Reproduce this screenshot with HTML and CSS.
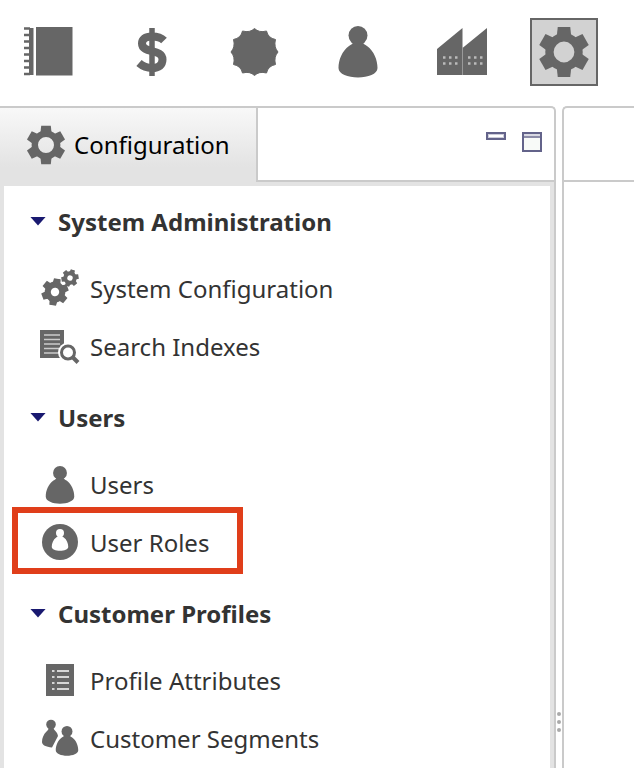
FILE: index.html
```html
<!DOCTYPE html>
<html lang="en">
<head>
<meta charset="utf-8">
<title>Configuration</title>
<link rel="stylesheet" href="styles.css">
</head>
<body>
<svg class="defs" aria-hidden="true">
  <symbol id="gear" viewBox="-25 -25 50 50">
    <circle r="14" fill="none" stroke="currentColor" stroke-width="8"/>
    <g fill="currentColor">
      <path id="tooth" d="M-6-24H6L7-15H-7Z"/>
      <use href="#tooth" transform="rotate(60)"/>
      <use href="#tooth" transform="rotate(120)"/>
      <use href="#tooth" transform="rotate(180)"/>
      <use href="#tooth" transform="rotate(240)"/>
      <use href="#tooth" transform="rotate(300)"/>
    </g>
  </symbol>
  <symbol id="cog" viewBox="-25 -25 50 50">
    <circle r="13" fill="none" stroke="currentColor" stroke-width="11"/>
    <g fill="currentColor">
      <use href="#tooth"/>
      <use href="#tooth" transform="rotate(60)"/>
      <use href="#tooth" transform="rotate(120)"/>
      <use href="#tooth" transform="rotate(180)"/>
      <use href="#tooth" transform="rotate(240)"/>
      <use href="#tooth" transform="rotate(300)"/>
    </g>
  </symbol>
  <symbol id="person" viewBox="-26 -26 52 52">
    <circle cy="-16.5" r="9.5"/>
    <path d="M-5-10C-5-8-7-7.500-9-6C-16-1-19.500 8-19.500 16C-19.500 22-10 25.500 0 25.500S19.500 22 19.500 16C19.500 8 16-1 9-6C7-7.500 5-8 5-10Z"/>
  </symbol>
</svg>

<nav class="toolbar" aria-label="Perspectives">
  <button class="tool" aria-label="Catalog">
    <svg viewBox="0 0 52 52"><path fill="currentColor" d="M13 1H49.500V49.500H13ZM6 2H10.500V49H6Z"/><path d="M1 2.500H7M1 9H7M1 15.500H7M1 22H7M1 28.500H7M1 35H7M1 41.500H7M1 48H7" stroke="currentColor" stroke-width="2.500"/></svg>
  </button>
  <button class="tool" aria-label="Pricing">
    <svg viewBox="0 0 52 52" fill="none" stroke="currentColor"><path stroke-width="5.500" d="M26 2V50"/><path stroke-width="8" d="M38 14.500C35 11.500 31 10.500 26 10.500C19 10.500 16 13.500 16 17.500C16 28 36.500 22 36.500 33.500C36.500 39 33 42 26 42C21 42 17 40.500 13 37"/></svg>
  </button>
  <button class="tool" aria-label="Promotions">
    <svg viewBox="-26 -26 52 52" fill="currentColor" stroke="currentColor" stroke-width="1" stroke-linejoin="round"><path d="M-.500-23.500Q4-19 11.500-21Q13-14 20.500-12.500Q18.500-5 23 0Q18.500 5 20.500 12.500Q13 14 11.500 21Q4 19-.500 23.500Q-5 19-12.500 21Q-14 14-21.500 12.500Q-19.500 5-24 0Q-19.500-5-21.500-12.500Q-14-14-12.500-21Q-5-19-.500-23.500Z"/></svg>
  </button>
  <button class="tool" aria-label="Customers">
    <svg fill="currentColor"><use href="#person"/></svg>
  </button>
  <button class="tool" aria-label="Warehouse">
    <svg viewBox="0 0 52 52"><path fill="currentColor" d="M2 23L27.500 2V22L52 2V49H2Z"/><path d="M27.500 22V49" stroke="#999"/><path stroke="#bbb" stroke-width="2.500" stroke-dasharray="2.500 3.500" d="M8 31.500H22.500M8 37.500H22.500M33 31.500H47.500M33 37.500H47.500"/></svg>
  </button>
  <button class="tool tool-active" aria-label="Configuration" aria-pressed="true">
    <svg><use href="#gear"/></svg>
  </button>
</nav>

<main class="workbench">
  <section class="panel">
    <header class="panel-head">
      <button class="tab"><svg class="tab-icon"><use href="#gear"/></svg>Configuration</button>
      <div class="window-tools">
        <button class="minimize" aria-label="Minimize"></button>
        <button class="maximize" aria-label="Maximize"></button>
      </div>
    </header>
    <div class="panel-body">
      <section class="group">
        <h2><button class="group-toggle" aria-expanded="true">System Administration</button></h2>
        <ul>
          <li><a href="#system-configuration">
            <svg class="icon" viewBox="0 0 40 40"><use href="#cog" x="1" y="9" width="28" height="28" transform="rotate(10 15 23)"/><use href="#cog" x="21" y="0" width="18" height="18" transform="rotate(20 30 9)"/></svg>
            System Configuration</a></li>
          <li><a href="#search-indexes">
            <svg class="icon" viewBox="0 0 40 40"><path fill="currentColor" d="M0 3H24V31H0Z"/><path stroke="#ccc" stroke-width="1.500" d="M4 8H20M4 12.500H20M4 17H20M4 21.500H20M4 26H20"/><circle cx="28" cy="25.500" r="10" fill="#fff"/><circle cx="28" cy="25.500" r="6.500" fill="#fff" stroke="currentColor" stroke-width="3"/><path stroke="currentColor" stroke-width="4" d="M32 29.500L38 35.500"/></svg>
            Search Indexes</a></li>
        </ul>
      </section>
      <section class="group">
        <h2><button class="group-toggle" aria-expanded="true">Users</button></h2>
        <ul>
          <li><a href="#users">
            <svg class="icon" viewBox="0 0 40 40"><use href="#person" x="1" y="1" width="38" height="38"/></svg>
            Users</a></li>
          <li class="highlighted"><a href="#user-roles">
            <svg class="icon" viewBox="0 0 40 40"><circle cx="20" cy="19" r="18"/><use class="cutout" href="#person" x="9" y="6" width="22" height="22"/></svg>
            User Roles</a></li>
        </ul>
      </section>
      <section class="group">
        <h2><button class="group-toggle" aria-expanded="true">Customer Profiles</button></h2>
        <ul>
          <li><a href="#profile-attributes">
            <svg class="icon" viewBox="0 0 40 40"><path fill="currentColor" d="M6 3H34V35H6Z"/><path stroke="#d5d5d5" stroke-width="2" d="M12 10H14.500M17 10H29M12 16H14.500M17 16H29M12 22H14.500M17 22H29M12 28H14.500M17 28H29"/></svg>
            Profile Attributes</a></li>
          <li><a href="#customer-segments">
            <svg class="icon" viewBox="0 0 40 40"><circle cx="11" cy="5.500" r="4.800"/><path d="M8.500 8C9 10 8 11 6.500 12.500C3.500 15.500 2 19 2 23C2 26 6 28 12 28.500L18 17C17.500 14 16 12.500 14.500 11C13.500 10 13.500 9 13.500 8Z"/><use class="halo" href="#person" x="12" y="7" width="30" height="30"/><use href="#person" x="12" y="7" width="30" height="30"/></svg>
            Customer Segments</a></li>
        </ul>
      </section>
    </div>
  </section>
  <div class="splitter" role="separator" aria-orientation="vertical"><i></i><i></i><i></i></div>
  <section class="panel editor" aria-label="Editor"><header class="panel-head"></header></section>
</main>
</body>
</html>
```
FILE: styles.css
```css
* { box-sizing: border-box; }

body {
  margin: 0;
  height: 100vh;
  overflow: hidden;
  display: flex;
  flex-direction: column;
  background: #fff;
  color: #333;
  font: 24px/32px "Noto Sans", sans-serif;
}

button {
  margin: 0;
  padding: 0;
  border: 0;
  background: none;
  color: inherit;
  font: inherit;
}

.defs { position: absolute; width: 0; height: 0; }

.toolbar {
  display: flex;
  gap: 35px;
  padding: 18px 15px 20px;
}

.tool {
  display: grid;
  place-items: center;
  flex: none;
  width: 68px;
  height: 68px;
  color: #666;
}

.tool svg { width: 52px; height: 52px; }

.tool-active { border: 2px solid #666; background: #d2d2d2; }

.workbench {
  flex: 1;
  min-height: 0;
  display: grid;
  grid-template-columns: 139fr 6px 18fr;
}

.panel {
  min-width: 0;
  display: flex;
  flex-direction: column;
  overflow: hidden;
  border-top: 2px solid #cacaca;
  border-right: 2px solid #cacaca;
  border-top-right-radius: 5px;
}

.editor {
  border-right: 0;
  border-left: 2px solid #cacaca;
  border-radius: 5px 0 0;
}

.panel-head {
  display: flex;
  flex: none;
  height: 74px;
  background: linear-gradient(#cacaca, #cacaca) bottom / 100% 2px no-repeat;
}

.tab {
  display: flex;
  align-items: center;
  gap: 8px;
  padding: 0 26px 0 26px;
  border-right: 2px solid #cacaca;
  background: linear-gradient(#f8f8f8, #e3e3e3 80%);
  color: #000;
}

.tab-icon { width: 40px; height: 40px; color: #666; }

.window-tools {
  display: flex;
  align-items: flex-start;
  gap: 16px;
  margin-left: auto;
  padding: 24px 12px;
}

.minimize, .maximize {
  width: 20px;
  height: 8px;
  border: 2px solid #63638a;
  box-shadow: inset 0 0 0 1px #ccccda;
}

.maximize {
  height: 20px;
  box-shadow: none;
  background: linear-gradient(#d8d8e2 2px, #8c8ca8 2px, #8c8ca8 4px, #f8faf8 4px);
}

.panel-body {
  flex: 1;
  min-height: 0;
  overflow: hidden;
  padding-top: 12px;
  border: 4px solid #e3e3e3;
  border-bottom: 0;
}

.group { margin-bottom: 18px; }

h2 { margin: 0 0 14px; font-size: 24px; line-height: 48px; }

.group-toggle {
  display: flex;
  align-items: center;
  gap: 12px;
  padding-left: 26px;
}

.group-toggle::before {
  content: "";
  width: 16px;
  height: 9px;
  margin-bottom: 2px;
  background: #191970;
  clip-path: polygon(0 0, 100% 0, 50% 100%);
}

ul { margin: 0; padding: 0; list-style: none; }

li { position: relative; width: fit-content; padding-right: 34px; }

li a {
  display: flex;
  align-items: center;
  gap: 10px;
  height: 58px;
  padding-left: 36px;
  color: inherit;
  text-decoration: none;
  white-space: nowrap;
}

.icon { width: 40px; height: 40px; color: #666; fill: #666; }
.cutout { fill: #fff; }
.halo { stroke: #fff; stroke-width: 5px; }

.highlighted::after {
  content: "";
  position: absolute;
  inset: -7px 0 -2px 8px;
  border: 6px solid #e03e1a;
  pointer-events: none;
}

.splitter {
  display: flex;
  flex-direction: column;
  align-items: center;
  gap: 4px;
  padding-top: 606px;
}

.splitter i { flex: none; width: 4px; height: 4px; border-radius: 2px; background: #aaa; }
```
